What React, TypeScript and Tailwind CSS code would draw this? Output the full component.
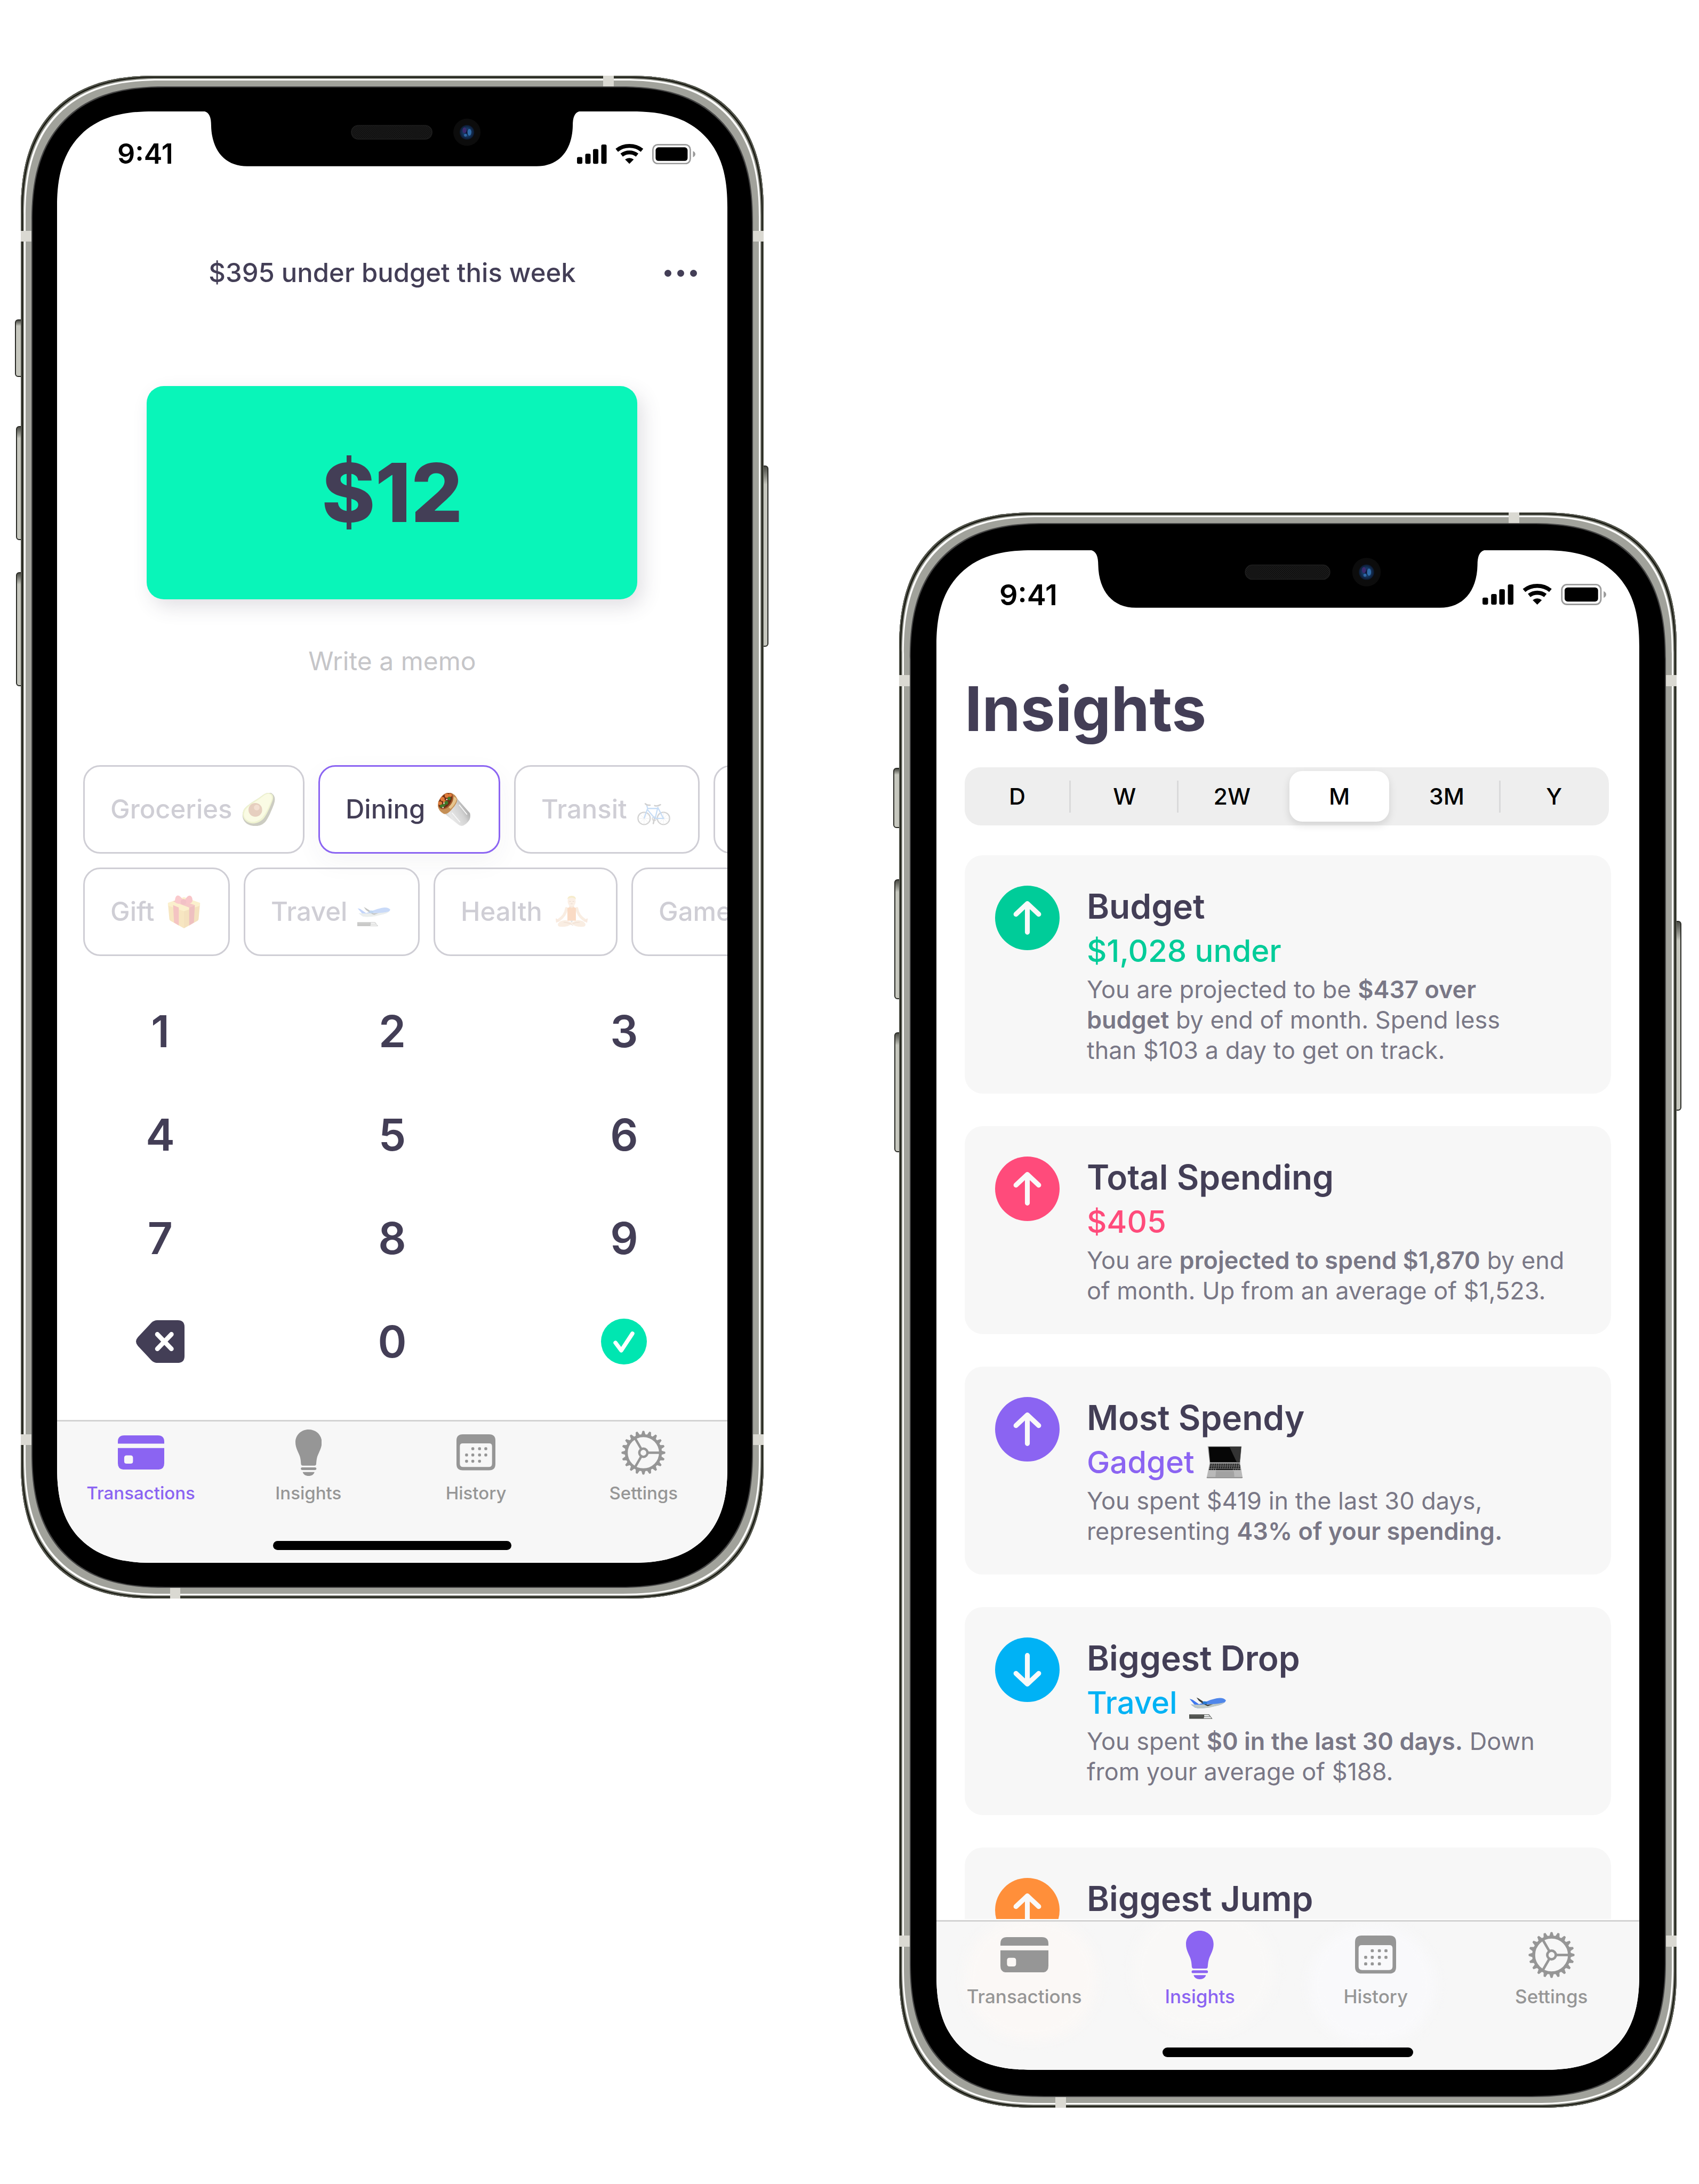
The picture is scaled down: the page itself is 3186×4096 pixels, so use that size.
import React from "react";

type TabName = "Transactions" | "Insights" | "History" | "Settings";

/* ---------- Emoji drawings ---------- */

function Avocado({ className }: { className: string }) {
  return (
    <svg viewBox="0 0 70 70" className={className} aria-hidden="true">
      <path d="M63 1C70 6 71 14 67 25C62 38 57 50 51 59C43 71 26 73 13 67C0 60-1 47 3 37C9 25 31 15 45 4C51 0 58-2 63 1Z" fill="#5a5a38" />
      <path d="M60 1C67 4 67 11 63 20C58 33 54 42 48 51C41 62 26 68 14 63C2 58-1 46 3 37C9 25 31 15 45 4C50 0 56-1 60 1Z" fill="#cdd86a" />
      <path d="M59 3C64 6 64 12 61 19C56 31 52 40 46 48C39 59 26 64 15 60C4 56 2 46 6 38C11 27 33 17 46 6C51 2 56 1 59 3Z" fill="#f0f3a8" />
      <circle cx="28" cy="36" r="14.5" fill="#b0622f" />
      <circle cx="31" cy="31" r="6" fill="#d99a6c" />
    </svg>
  );
}

function Burrito({ className }: { className: string }) {
  return (
    <svg viewBox="0 0 70 70" className={className} aria-hidden="true">
      <defs>
        <linearGradient id="foil" x1="0" y1="1" x2="1" y2="0.4">
          <stop offset="0" stopColor="#a9a9a9" />
          <stop offset="0.35" stopColor="#e8e8e8" />
          <stop offset="0.7" stopColor="#d2d2d2" />
          <stop offset="1" stopColor="#a2a2a2" />
        </linearGradient>
      </defs>
      <path d="M13 43L41 12L68 43Q70 50 67 57Q60 68 51 70Q46 70 43 67Z" fill="url(#foil)" />
      <path d="M30 42L47 62M45 25L62 46" stroke="#f8f8f8" strokeWidth="2" fill="none" />
      <path d="M0 28Q2 40 14 45Q22 45 31 33Q42 22 41 12Q36 2 27 0L12 4L1 18Z" fill="#c58f55" />
      <path d="M33 8Q40 10 40 14Q37 25 27 34Q20 30 22 24Z" fill="#e6c48d" />
      <ellipse cx="17" cy="17" rx="13" ry="20" transform="rotate(38 17 17)" fill="#a35a2b" />
      <ellipse cx="16" cy="17" rx="11" ry="18" transform="rotate(38 16 17)" fill="#6a2c15" />
      <g fill="#e07b39">
        <circle cx="19" cy="6" r="4.5" />
        <circle cx="10" cy="13" r="4.5" />
        <circle cx="26" cy="5" r="3.5" />
        <circle cx="5" cy="22" r="4" />
        <circle cx="14" cy="18" r="3" />
      </g>
      <g fill="#3f7a2a">
        <circle cx="24" cy="12" r="3.5" />
        <circle cx="18" cy="21" r="4" />
        <circle cx="8" cy="28" r="3.5" />
        <circle cx="13" cy="26" r="3" />
      </g>
      <g fill="#ead8cf">
        <circle cx="13" cy="22" r="1.6" />
        <circle cx="19" cy="14" r="1.6" />
        <circle cx="11" cy="31" r="1.6" />
      </g>
    </svg>
  );
}

function Bicycle({ className }: { className: string }) {
  return (
    <svg viewBox="0 0 70 70" className={className} fill="none" aria-hidden="true">
      <g stroke="#6f6f6f" strokeWidth="2.6">
        <circle cx="14.5" cy="54" r="13" />
        <circle cx="55.5" cy="54" r="13" />
      </g>
      <g stroke="#b9b9b9" strokeWidth="0.8">
        <path d="M14.500 41V67M1.500 54H27.500M5.500 45L23.500 63M23.500 45L5.500 63" />
        <path d="M55.500 41V67M42.500 54H68.500M46.500 45L64.500 63M64.500 45L46.500 63" />
      </g>
      <circle cx="36" cy="55" r="4" stroke="#777" strokeWidth="2" />
      <path d="M14.500 54L22 33H43L38 54H55.500L43 30M22 36L37 54M22 33L20 26" stroke="#4a90e2" strokeWidth="2.600" />
      <path d="M17 23Q21 27 27 26M37 27Q43 29 49 25M36 55L34 65" stroke="#666" strokeWidth="3" strokeLinecap="round" />
    </svg>
  );
}

function Gift({ className }: { className: string }) {
  return (
    <svg viewBox="0 0 70 70" className={className} aria-hidden="true">
      <path d="M1 17L35 28V70L6 54Q4 53 4 50Z" fill="#e7ae35" />
      <path d="M69 17L35 28V70L64 54Q66 53 66 50Z" fill="#dd9f2b" />
      <path d="M1 16L35 4L69 16V22L35 34L1 22Z" fill="#f3cf5c" />
      <path d="M12 21L24 26V64L14 58Z" fill="#dd3f3a" />
      <path d="M58 21L46 26V64L56 58Z" fill="#c93232" />
      <path d="M12 13L46 26L58 21L24 9Z" fill="#e04a45" />
      <path d="M35 17C25 19 15 19 16 10C17 0 22-1 26 2C31 6 34 11 35 17Z" fill="#f0525c" />
      <path d="M35 17C45 18 54 18 53 9C52 0 46-1 42 3C38 7 36 11 35 17Z" fill="#ea4350" />
      <circle cx="34" cy="14" r="6" fill="#d63444" />
    </svg>
  );
}

function Plane({ className }: { className: string }) {
  return (
    <svg viewBox="0 0 76 76" className={className} aria-hidden="true">
      <path d="M1 30L7 32L20 41L34 36Q46 31 56 29Q70 26 76 33Q74 39 62 43L42 47Q22 51 12 48L4 42L12 42Z" fill="#4f86ea" />
      <path d="M1 30L7 32L20 41L12 43Z" fill="#3f78f0" />
      <path d="M3 41L20 42L38 41Q60 41 73 37Q68 42 58 44L42 48Q22 51 12 48Z" fill="#bfc9c6" />
      <path d="M15 27L19 29L30 36L39 44L36 44L27 39L20 34Z" fill="#3c3f3c" />
      <path d="M27 36Q31 34 37 36V41H30Z" fill="#2a7bd6" />
      <path d="M36 42L49 41L38 45Z" fill="#333733" />
      <path d="M0 62H41L48 71H0Z" fill="#4e504c" />
      <path d="M31 63H40L43 66H31ZM31 67H44L46 70H30Z" fill="#eceeee" />
      <path d="M2 65H28" stroke="#6e706c" strokeWidth="1" />
    </svg>
  );
}

function Yoga({ className }: { className: string }) {
  return (
    <svg viewBox="0 0 70 70" className={className} aria-hidden="true">
      <path d="M24 28Q22 43 7 53M46 28Q48 43 63 53" stroke="#eec6a3" strokeWidth="6" fill="none" strokeLinecap="round" />
      <path d="M2 50L8 54L3 57ZM68 50L62 54L67 57Z" fill="#e9bd98" stroke="#e9bd98" strokeWidth="2" strokeLinejoin="round" />
      <path d="M30 20H40V28H30Z" fill="#e4b48c" />
      <ellipse cx="35" cy="13" rx="8.500" ry="11" fill="#f3cdab" />
      <path d="M26 9Q26 1 35 1Q44 1 44 9Q40 5 35 5Q29 5 26 9Z" fill="#e4c35a" />
      <path d="M30 13H33M37 13H40M33 18H37" stroke="#a87650" strokeWidth="1" />
      <path d="M26 27Q30 25 31 25Q35 29 39 25Q41 25 44 27V54H26Z" fill="#f08a41" />
      <path d="M24 53Q12 52 6 60Q4 67 14 67Q28 67 35 60Q42 67 56 67Q66 67 64 60Q58 52 46 53Q40 55 35 58Q30 55 24 53Z" fill="#eec6a3" />
      <path d="M18 57Q30 58 38 64M52 57Q44 57 37 60" stroke="#d09c72" strokeWidth="1.500" fill="none" />
      <path d="M32 54H38L35 58Z" fill="#9aa0a0" />
    </svg>
  );
}

function Laptop({ className }: { className: string }) {
  return (
    <svg viewBox="0 0 76 76" className={className} aria-hidden="true">
      <path d="M3 5H73L70 39H7Z" fill="#9a9a9a" />
      <path d="M5 6H72L69 38H8Z" fill="#060606" />
      <path d="M48 6H72L69 38H63Z" fill="#333" />
      <path d="M7 39H70L75 69Q75 71 73 71H3Q0 71 1 69Z" fill="#b9b9b9" />
      <path d="M8 40H69L71 54H5Z" fill="#8a8a8a" />
      <g stroke="#1a1a1a" strokeWidth="2.600" strokeDasharray="3.600 1">
        <path d="M8 42H69" />
        <path d="M7.500 45.500H70" />
        <path d="M7 49H70" />
        <path d="M6 52.800H71" />
      </g>
      <path d="M21 52.800H55" stroke="#1a1a1a" strokeWidth="2.600" />
      <path d="M20 56H57L58 68H19Z" fill="#a2a2a2" />
      <path d="M1 69.500H75" stroke="#8d8d8d" strokeWidth="2" />
    </svg>
  );
}

/* ---------- Interface icons ---------- */

function CardIcon({ className }: { className: string }) {
  return (
    <svg viewBox="0 0 95 70" className={className} fill="currentColor" aria-hidden="true">
      <path d="M0 17V13Q0 0 13 0H82Q95 0 95 13V17Z" />
      <path
        fillRule="evenodd"
        d="M0 26H95V57Q95 70 82 70H13Q0 70 0 57ZM18 41Q13 41 13 46V53Q13 58 18 58H26Q31 58 31 53V46Q31 41 26 41Z"
      />
    </svg>
  );
}

function BulbIcon({ className }: { className: string }) {
  return (
    <svg viewBox="0 0 54 95" className={className} fill="currentColor" aria-hidden="true">
      <path d="M27 0C42 0 54 11 54 26C54 38 48 46 45 55C43 62 43 66 42.500 71Q42 74 39 74H15Q12 74 11.500 71C11 66 11 62 9 55C6 46 0 38 0 26C0 11 12 0 27 0Z" />
      <rect x="11" y="77.500" width="32" height="5.500" rx="2.700" />
      <path d="M15 87H39C38 92 33 95 27 95S16 92 15 87Z" />
    </svg>
  );
}

function CalendarIcon({ className }: { className: string }) {
  const dots = [
    [34, 30], [48, 30], [61, 30],
    [21, 43], [34, 43], [48, 43], [61, 43],
    [21, 56], [34, 56], [48, 56],
  ];
  return (
    <svg viewBox="0 0 81 75" className={className} fill="currentColor" aria-hidden="true">
      <path
        fillRule="evenodd"
        d="M13 0H68Q81 0 81 13V62Q81 75 68 75H13Q0 75 0 62V13Q0 0 13 0ZM13 19Q7 19 7 25V61Q7 68 14 68H67Q74 68 74 61V25Q74 19 68 19Z"
      />
      {dots.map(([x, y]) => (
        <rect key={`${x}-${y}`} x={x - 3} y={y - 3} width="6" height="6" rx="2" />
      ))}
    </svg>
  );
}

function GearIcon({ className }: { className: string }) {
  const teeth = Array.from({ length: 20 }, (_, i) => i * 18);
  return (
    <svg viewBox="0 0 92 92" className={className} fill="none" stroke="currentColor" aria-hidden="true">
      <circle cx="46" cy="46" r="35.500" strokeWidth="6" />
      <circle cx="46" cy="46" r="8.500" strokeWidth="5" />
      {[0, 120, 240].map((a) => (
        <path key={a} d="M55 46H82" strokeWidth="5" transform={`rotate(${a} 46 46)`} />
      ))}
      {teeth.map((a) => (
        <path
          key={a}
          d="M83 42L91 44.500V47.500L83 50Z"
          fill="currentColor"
          strokeWidth="1"
          strokeLinejoin="round"
          transform={`rotate(${a} 46 46)`}
        />
      ))}
    </svg>
  );
}

function StatusIcons({ className }: { className: string }) {
  return (
    <svg viewBox="0 0 244 42" className={className} aria-hidden="true">
      <rect x="0" y="27" width="11" height="14" rx="3" />
      <rect x="17" y="20" width="11" height="21" rx="3" />
      <rect x="33" y="10.500" width="11" height="30.500" rx="3" />
      <rect x="50" y="1" width="11" height="40" rx="3" />
      <g fill="none" stroke="#000">
        <path d="M82 13Q93 4 108 4T134 13" strokeWidth="8" />
        <path d="M92 23Q99 17.500 108 17.500T124 23" strokeWidth="8" />
      </g>
      <path d="M99 32Q108 25.500 117 32L108 41Z" />
      <rect x="156.500" y="1.500" width="77" height="39" rx="10" fill="none" stroke="#9b9b9b" strokeWidth="3" />
      <rect x="162" y="7" width="66" height="28" rx="6" />
      <path d="M239 14.500Q244 17 244 21T239 27.500Z" fill="#9b9b9b" />
    </svg>
  );
}

function ArrowBadge({ down, className }: { down?: boolean; className: string }) {
  return (
    <svg viewBox="0 0 133 133" className={className} aria-hidden="true">
      <circle cx="66.500" cy="66.500" r="66.500" fill="currentColor" />
      <path
        d={down ? "M66.500 37V95M43 74L66.500 96L90 74" : "M66.500 96V38M43 59L66.500 37L90 59"}
        fill="none"
        stroke="#f9f9f9"
        strokeWidth="10"
        strokeLinecap="round"
        strokeLinejoin="round"
      />
    </svg>
  );
}

/* ---------- Device ---------- */

function Notch() {
  return (
    <svg viewBox="0 0 787 114" className="absolute -top-px left-1/2 z-10 w-[57%] -translate-x-1/2" aria-hidden="true">
      <defs>
        <pattern id="mesh" width="4" height="4" patternUnits="userSpaceOnUse">
          <rect width="4" height="4" fill="#0c0c0c" />
          <circle cx="1" cy="1" r="0.900" fill="#262626" />
          <circle cx="3" cy="3" r="0.900" fill="#262626" />
        </pattern>
        <radialGradient id="lens">
          <stop offset="0" stopColor="#0a1030" />
          <stop offset="0.500" stopColor="#173a66" />
          <stop offset="1" stopColor="#0c1930" />
        </radialGradient>
      </defs>
      <path d="M0 0C15 0 21 9 21 30C22 82 50 114 95 114H692C737 114 765 82 766 30C766 9 772 0 787 0Z" fill="#000" />
      <rect x="310" y="30" width="166" height="28" rx="14" fill="url(#mesh)" stroke="#1d1d1d" strokeWidth="2" />
      <circle cx="548" cy="44" r="28" fill="#0c0c0c" />
      <circle cx="548" cy="44" r="15" fill="url(#lens)" />
      <ellipse cx="543" cy="40" rx="4" ry="6" fill="#3c2a6e" />
      <ellipse cx="553" cy="44" rx="4" ry="7" fill="#2f6ba8" />
      <circle cx="545" cy="50" r="3" fill="#2c66a6" />
    </svg>
  );
}

const sideButton =
  "absolute border-2 border-[#2a2b26] bg-linear-to-b from-[#4b4c46] via-[#c6c7be] via-10% to-[#c6c7be] to-90%";
const band = "absolute bg-[#dad9d2]";

function Phone({
  className,
  bezel,
  label,
  children,
}: {
  className: string;
  bezel: string;
  label: string;
  children: React.ReactNode;
}) {
  return (
    <section aria-label={label} className={`relative shrink-0 ${className}`}>
      <span className={`${sideButton} -left-[11px] top-[16%] h-[3.8%] w-4 rounded-l-md`} />
      <span className={`${sideButton} -left-[9px] top-[23%] h-[7.5%] w-4 rounded-l-md`} />
      <span className={`${sideButton} -left-[9px] top-[32.600%] h-[7.5%] w-4 rounded-l-md`} />
      <span className={`${sideButton} -right-[9px] top-[25.600%] h-[11.900%] w-4 rounded-r-md`} />
      <div
        className={`relative bg-black rounded-[216px] supports-[corner-shape:squircle]:rounded-[258px] [corner-shape:superellipse(1.3)] shadow-[inset_0_0_0_2px_#55574e,inset_0_0_0_4px_#16170f,inset_0_0_0_6px_#80827a,inset_0_0_0_9px_#fdfdfb,inset_0_0_0_20px_#a1a29b,inset_0_0_0_22px_#444444] ${bezel}`}
      >
        <span className={`${band} left-0 top-[10.200%] h-[0.700%] w-5`} />
        <span className={`${band} right-0 top-[10.200%] h-[0.700%] w-5`} />
        <span className={`${band} left-0 top-[89.200%] h-[0.700%] w-5`} />
        <span className={`${band} right-0 top-[89.200%] h-[0.700%] w-5`} />
        <span className={`${band} left-[78.400%] top-0 h-5 w-[1.400%]`} />
        <span className={`${band} bottom-0 left-[20.100%] h-5 w-[1.400%]`} />
        <div className="relative flex flex-col overflow-hidden bg-white rounded-[151px] supports-[corner-shape:squircle]:rounded-[180px] [corner-shape:superellipse(1.3)]">
          <Notch />
          {children}
        </div>
      </div>
    </section>
  );
}

const tabs: { name: TabName; Icon: (p: { className: string }) => React.ReactNode; small: string; large: string }[] = [
  { name: "Transactions", Icon: CardIcon, small: "w-[87px]", large: "w-[90px]" },
  { name: "Insights", Icon: BulbIcon, small: "h-[87px]", large: "h-[91px]" },
  { name: "History", Icon: CalendarIcon, small: "w-[73px]", large: "w-[77px]" },
  { name: "Settings", Icon: GearIcon, small: "w-[83px]", large: "w-[87px]" },
];

function TabBar({ active, large }: { active: TabName; large?: boolean }) {
  return (
    <nav
      className={`relative flex flex-col justify-between overflow-hidden border-t-[3px] border-[#d3d3d3] bg-[#f7f7f7] ${
        large ? "h-[281px] pb-6" : "h-[268px] pb-6"
      }`}
    >
      {large && (
        <>
          <span className="absolute -top-2 left-[4%] h-[230px] w-[19%] rounded-full bg-[#fbf8f6] blur-md" />
          <span className="absolute -top-6 left-[28%] h-[230px] w-[20%] rounded-full bg-[#f9f8f7] blur-md" />
          <span className="absolute top-2 left-[53%] h-[220px] w-[18%] rounded-full bg-[#f9f9fb] blur-md" />
        </>
      )}
      <div className="relative grid grid-cols-4">
        {tabs.map(({ name, Icon, small, large: big }) => (
          <button
            key={name}
            type="button"
            aria-current={name === active ? "page" : undefined}
            className={`flex flex-col items-center pt-3 font-medium ${
              large ? "text-[35px] leading-10" : "text-[33px] leading-9"
            } ${name === active ? "text-[#8b64f2]" : "text-[#969696]"}`}
          >
            <span className={`flex items-center ${large ? "h-[100px]" : "h-[92px]"}`}>
              <Icon className={large ? big : small} />
            </span>
            <span className={large ? "mt-2" : "mt-3"}>{name}</span>
          </button>
        ))}
      </div>
      <span className={`relative mx-auto w-[35.600%] rounded-full bg-black ${large ? "h-[18px]" : "h-[17px]"}`} />
    </nav>
  );
}

/* ---------- Transactions screen ---------- */

function Chip({
  label,
  width,
  selected,
  children,
}: {
  label: string;
  width: string;
  selected?: boolean;
  children?: React.ReactNode;
}) {
  return (
    <button
      type="button"
      aria-pressed={!!selected}
      className={`flex h-[166px] shrink-0 items-center justify-between rounded-[32px] border-[3px] pl-[48px] pr-[52px] text-[49px] font-medium ${width} ${
        selected
          ? "border-[#8b64f2] text-[#433e56] shadow-[0_16px_48px_rgba(67,62,86,0.05)]"
          : "border-[#cfced5] text-[#cfced5]"
      }`}
    >
      {label}
      {children}
    </button>
  );
}

function Transactions() {
  const emoji = "w-[62px] h-[62px] opacity-30";
  return (
    <>
      <div className="flex h-[160px] items-center justify-between pl-[113px] pr-[60px]">
        <span className="text-[52px] font-semibold text-black">9:41</span>
        <StatusIcons className="w-[222px]" />
      </div>
      <header className="relative mt-[103px] flex h-20 items-center justify-center">
        <h1 className="text-[49px] font-medium">$395 under budget this week</h1>
        <button type="button" aria-label="More" className="absolute right-[57px] flex gap-[11px]">
          <span className="size-[13px] rounded-full bg-[#433e56]" />
          <span className="size-[13px] rounded-full bg-[#433e56]" />
          <span className="size-[13px] rounded-full bg-[#433e56]" />
        </button>
      </header>
      <div className="mx-auto mt-[172px] flex h-[400px] w-[73.200%] items-center justify-center rounded-[32px] bg-[#09f5b9] text-[152px] font-extrabold shadow-[10px_14px_36px_rgba(67,62,86,0.160)]">
        $12
      </div>
      <input
        aria-label="Memo"
        placeholder="Write a memo"
        className="mx-auto mt-[81px] h-[70px] w-[73%] bg-transparent text-center text-[48px] outline-none placeholder:text-[#c5c5c8]"
      />
      <div className="mt-[160px] flex flex-col gap-[26px]">
        <div className="flex gap-[26px] pl-[49px]">
          <Chip label="Groceries" width="w-[415px]">
            <Avocado className={emoji} />
          </Chip>
          <Chip label="Dining" width="w-[341px]" selected>
            <Burrito className="size-[62px]" />
          </Chip>
          <Chip label="Transit" width="w-[348px]">
            <Bicycle className={emoji} />
          </Chip>
          <Chip label="" width="w-[340px]" />
        </div>
        <div className="flex gap-[26px] pl-[49px]">
          <Chip label="Gift" width="w-[275px]">
            <Gift className={emoji} />
          </Chip>
          <Chip label="Travel" width="w-[330px]">
            <Plane className={emoji} />
          </Chip>
          <Chip label="Health" width="w-[345px]">
            <Yoga className={emoji} />
          </Chip>
          <Chip label="Games" width="w-[345px]" />
        </div>
      </div>
      <div className="mt-11 grid grid-cols-3 gap-x-12">
        {["1", "2", "3", "4", "5", "6", "7", "8", "9"].map((n) => (
          <button key={n} type="button" className="h-[194px] text-[82px] font-semibold">
            {n}
          </button>
        ))}
        <button type="button" aria-label="Delete" className="flex h-[194px] items-center justify-center">
          <svg viewBox="0 0 100 88" className="w-[91px]" aria-hidden="true">
            <path d="M44 0H86Q100 0 100 14V74Q100 88 86 88H44Q37 88 32 83L4 53Q-4 44 4 35L32 5Q37 0 44 0Z" fill="#433e56" />
            <path d="M44 29L73 59M73 29L44 59" stroke="#fff" strokeWidth="9.500" strokeLinecap="round" />
          </svg>
        </button>
        <button type="button" className="h-[194px] text-[82px] font-semibold">
          0
        </button>
        <button type="button" aria-label="Confirm" className="flex h-[194px] items-center justify-center">
          <svg viewBox="0 0 95 95" className="w-[86px]" aria-hidden="true">
            <circle cx="47.500" cy="47.500" r="47.500" fill="#00e6b1" />
            <path d="M30 50L42 66L65 31" fill="none" stroke="#fff" strokeWidth="8.500" strokeLinecap="round" strokeLinejoin="round" />
          </svg>
        </button>
      </div>
      <div className="mt-[50px]">
        <TabBar active="Transactions" />
      </div>
    </>
  );
}

/* ---------- Insights screen ---------- */

const ranges = ["D", "W", "2W", "M", "3M", "Y"];
const divided = ["D", "W", "3M"];

function InsightCard({
  title,
  value,
  color,
  emoji,
  down,
  children,
}: {
  title: string;
  value: string;
  color: string;
  emoji?: React.ReactNode;
  down?: boolean;
  children?: React.ReactNode;
}) {
  return (
    <article className="flex shrink-0 gap-[51px] rounded-[34px] bg-[#f7f7f7] pb-[53px] pl-[57px] pt-[57px]">
      <ArrowBadge down={down} className={`size-[121px] shrink-0 ${color}`} />
      <div>
        <h2 className="text-[64px] font-semibold leading-[78px]">{title}</h2>
        <p className={`flex h-[88px] items-center gap-[22px] text-[58px] font-medium ${color}`}>
          {value}
          {emoji}
        </p>
        <p className="whitespace-nowrap text-[45px] leading-[57px] text-[#797786]">{children}</p>
      </div>
    </article>
  );
}

function B({ children }: { children: React.ReactNode }) {
  return <strong className="font-semibold">{children}</strong>;
}

function Insights() {
  return (
    <>
      <div className="flex h-[166px] items-center justify-between pl-[118px] pr-[62px]">
        <span className="text-[54px] font-semibold text-black">9:41</span>
        <StatusIcons className="w-[232px]" />
      </div>
      <div className="mt-[61px] flex flex-col px-[53px]">
        <h1 className="text-[116px] font-bold leading-[140px]">Insights</h1>
        <div className="mr-1 mt-10 grid h-[109px] grid-cols-6 rounded-[30px] bg-[#eeeeee]">
          {ranges.map((r) => (
            <button
              key={r}
              type="button"
              aria-pressed={r === "M"}
              className="relative flex items-center justify-center py-[7px] pl-[5px] pr-[9px] text-[43px] font-medium text-black"
            >
              <span
                className={
                  r === "M"
                    ? "flex size-full items-center justify-center rounded-3xl bg-white shadow-[0_6px_16px_rgba(0,0,0,0.120)]"
                    : ""
                }
              >
                {r}
              </span>
              {divided.includes(r) && <span className="absolute right-0.5 h-[60px] w-[3px] bg-[#d9d9da]" />}
            </button>
          ))}
        </div>
        <div className="mt-14 flex h-[1995px] flex-col gap-[61px] overflow-hidden">
          <InsightCard title="Budget" value="$1,028 under" color="text-[#00cc99]">
            You are projected to be <B>$437 over</B>
            <br />
            <B>budget</B> by end of month. Spend less
            <br />
            than $103 a day to get on track.
          </InsightCard>
          <InsightCard title="Total Spending" value="$405" color="text-[#ff4b7b]">
            You are <B>projected to spend $1,870</B> by end
            <br />
            of month. Up from an average of $1,523.
          </InsightCard>
          <InsightCard
            title="Most Spendy"
            value="Gadget"
            color="text-[#8b64f2]"
            emoji={<Laptop className="size-[69px]" />}
          >
            You spent $419 in the last 30 days,
            <br />
            representing <B>43% of your spending.</B>
          </InsightCard>
          <InsightCard
            title="Biggest Drop"
            value="Travel"
            color="text-[#00b2f5]"
            down
            emoji={<Plane className="size-[69px]" />}
          >
            You spent <B>$0 in the last 30 days.</B> Down
            <br />
            from your average of $188.
          </InsightCard>
          <InsightCard title="Biggest Jump" value="" color="text-[#ff8f3a]" />
        </div>
      </div>
      <div className="mt-0.5">
        <TabBar active="Insights" large />
      </div>
    </>
  );
}

export default function App() {
  return (
    <main className="flex min-h-screen w-full items-start justify-between bg-white pb-36 pl-[39px] pr-[42px] font-['Inter','Liberation_Sans',sans-serif] text-[#433e56]">
      <Phone label="Transactions" className="mt-[142px] w-[44.860%]" bezel="px-[68px] py-[67px]">
        <Transactions />
      </Phone>
      <Phone label="Insights" className="mt-[961px] w-[46.960%]" bezel="px-[70px] py-[71px]">
        <Insights />
      </Phone>
    </main>
  );
}
